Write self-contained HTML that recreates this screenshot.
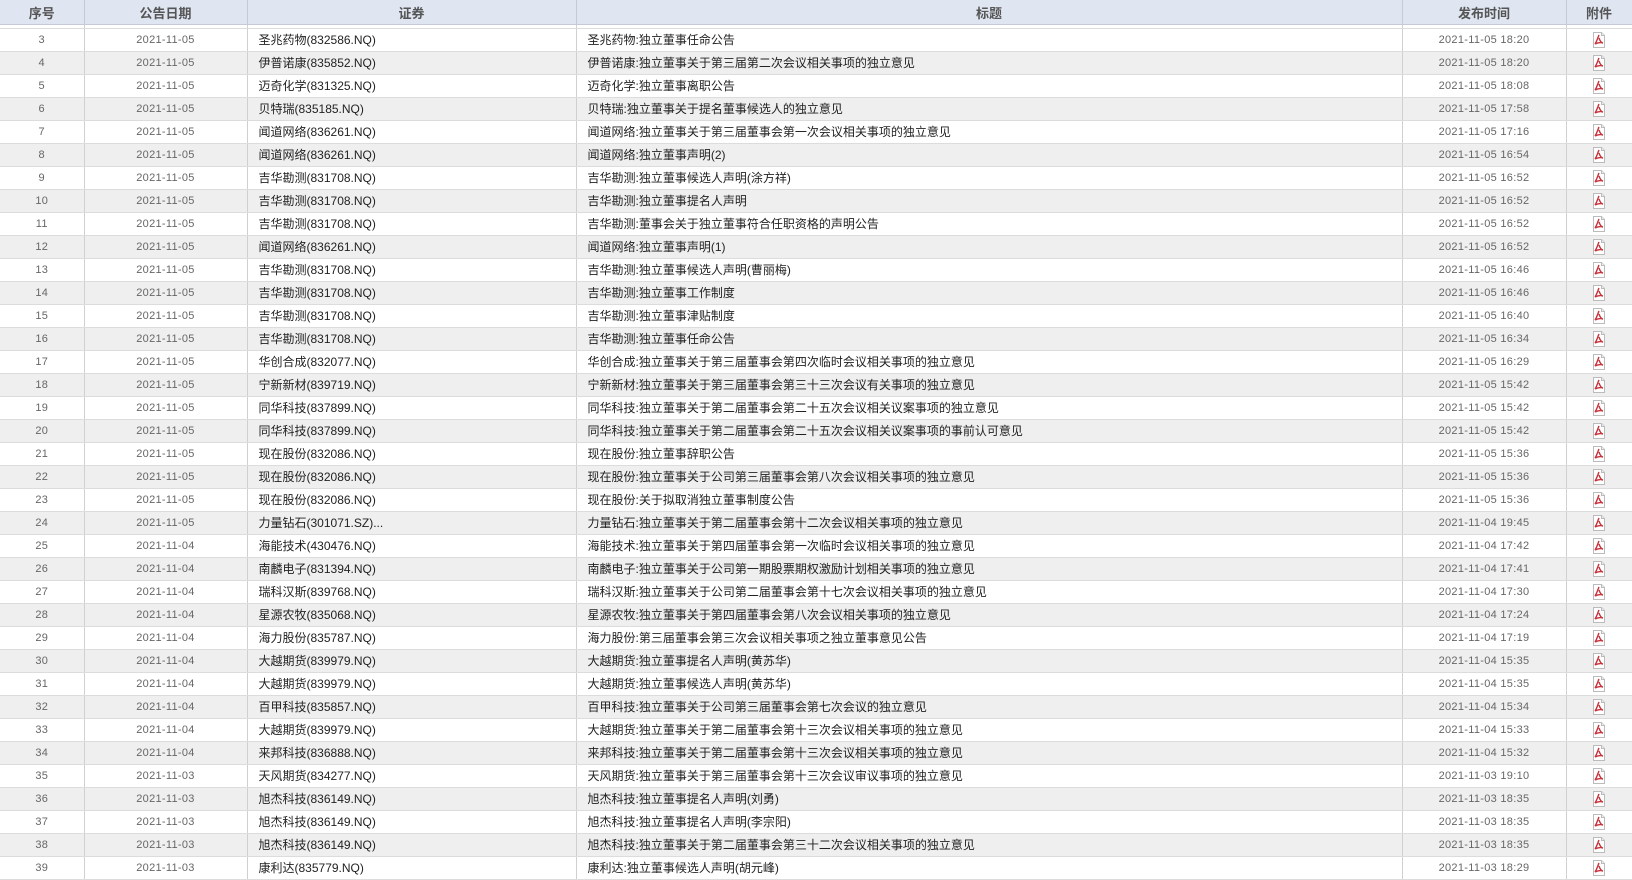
<!DOCTYPE html>
<html><head><meta charset="utf-8"><style>
body{margin:0;background:#fff;font-family:"Liberation Sans","Noto Sans CJK SC",sans-serif;font-size:12px;color:#222;overflow:hidden;width:1632px;height:868px}
table{border-collapse:collapse;table-layout:fixed;width:1632px}
th{height:24px;background:#dfe6f2;color:#555;font-weight:bold;font-size:13px;border-right:1px solid #c4cbd6;border-bottom:1px solid #c4cbd6;padding:0}
tr.gap td{height:3px;border-bottom:1px solid #ddd;padding:0;background:#fff}
td{height:22px;line-height:22px;vertical-align:middle;border-right:1px solid #d0d0d0;border-bottom:1px solid #dcdcdc;padding:0;white-space:nowrap;overflow:hidden;background:#efefef}
tr.w td{background:#fff}
td.c{text-align:center;color:#666;font-size:11px;letter-spacing:0.3px}
td.l{padding-left:11px}
td.p{text-align:center;font-size:0;line-height:0}
td.p svg{vertical-align:middle}
</style></head><body>
<svg width="0" height="0" style="position:absolute"><defs><g id="pdf"><path d="M1.5 0.5h8l3 3v12h-11z" fill="#fff" stroke="#bbb"/><path d="M9.5 0.5v3h3" fill="#eee" stroke="#bbb"/><path d="M7 3c-1 2 -2 6 -4 9M7 6c1 3 2 5 4 5M3 12c2-1 5-2 8-1" fill="none" stroke="#c8323a" stroke-width="1.4"/></g></defs></svg>
<table>
<colgroup><col style="width:84px"><col style="width:163px"><col style="width:329px"><col style="width:826px"><col style="width:164px"><col style="width:66px"></colgroup>
<thead><tr><th>序号</th><th>公告日期</th><th>证券</th><th>标题</th><th>发布时间</th><th>附件</th></tr>
<tr class="gap"><td></td><td></td><td></td><td></td><td></td><td></td></tr></thead>
<tbody>
<tr class="w"><td class="c">3</td><td class="c">2021-11-05</td><td class="l">圣兆药物(832586.NQ)</td><td class="l">圣兆药物:独立董事任命公告</td><td class="c">2021-11-05 18:20</td><td class="p"><svg width="14" height="16"><use href="#pdf"/></svg></td></tr>
<tr><td class="c">4</td><td class="c">2021-11-05</td><td class="l">伊普诺康(835852.NQ)</td><td class="l">伊普诺康:独立董事关于第三届第二次会议相关事项的独立意见</td><td class="c">2021-11-05 18:20</td><td class="p"><svg width="14" height="16"><use href="#pdf"/></svg></td></tr>
<tr class="w"><td class="c">5</td><td class="c">2021-11-05</td><td class="l">迈奇化学(831325.NQ)</td><td class="l">迈奇化学:独立董事离职公告</td><td class="c">2021-11-05 18:08</td><td class="p"><svg width="14" height="16"><use href="#pdf"/></svg></td></tr>
<tr><td class="c">6</td><td class="c">2021-11-05</td><td class="l">贝特瑞(835185.NQ)</td><td class="l">贝特瑞:独立董事关于提名董事候选人的独立意见</td><td class="c">2021-11-05 17:58</td><td class="p"><svg width="14" height="16"><use href="#pdf"/></svg></td></tr>
<tr class="w"><td class="c">7</td><td class="c">2021-11-05</td><td class="l">闻道网络(836261.NQ)</td><td class="l">闻道网络:独立董事关于第三届董事会第一次会议相关事项的独立意见</td><td class="c">2021-11-05 17:16</td><td class="p"><svg width="14" height="16"><use href="#pdf"/></svg></td></tr>
<tr><td class="c">8</td><td class="c">2021-11-05</td><td class="l">闻道网络(836261.NQ)</td><td class="l">闻道网络:独立董事声明(2)</td><td class="c">2021-11-05 16:54</td><td class="p"><svg width="14" height="16"><use href="#pdf"/></svg></td></tr>
<tr class="w"><td class="c">9</td><td class="c">2021-11-05</td><td class="l">吉华勘测(831708.NQ)</td><td class="l">吉华勘测:独立董事候选人声明(涂方祥)</td><td class="c">2021-11-05 16:52</td><td class="p"><svg width="14" height="16"><use href="#pdf"/></svg></td></tr>
<tr><td class="c">10</td><td class="c">2021-11-05</td><td class="l">吉华勘测(831708.NQ)</td><td class="l">吉华勘测:独立董事提名人声明</td><td class="c">2021-11-05 16:52</td><td class="p"><svg width="14" height="16"><use href="#pdf"/></svg></td></tr>
<tr class="w"><td class="c">11</td><td class="c">2021-11-05</td><td class="l">吉华勘测(831708.NQ)</td><td class="l">吉华勘测:董事会关于独立董事符合任职资格的声明公告</td><td class="c">2021-11-05 16:52</td><td class="p"><svg width="14" height="16"><use href="#pdf"/></svg></td></tr>
<tr><td class="c">12</td><td class="c">2021-11-05</td><td class="l">闻道网络(836261.NQ)</td><td class="l">闻道网络:独立董事声明(1)</td><td class="c">2021-11-05 16:52</td><td class="p"><svg width="14" height="16"><use href="#pdf"/></svg></td></tr>
<tr class="w"><td class="c">13</td><td class="c">2021-11-05</td><td class="l">吉华勘测(831708.NQ)</td><td class="l">吉华勘测:独立董事候选人声明(曹丽梅)</td><td class="c">2021-11-05 16:46</td><td class="p"><svg width="14" height="16"><use href="#pdf"/></svg></td></tr>
<tr><td class="c">14</td><td class="c">2021-11-05</td><td class="l">吉华勘测(831708.NQ)</td><td class="l">吉华勘测:独立董事工作制度</td><td class="c">2021-11-05 16:46</td><td class="p"><svg width="14" height="16"><use href="#pdf"/></svg></td></tr>
<tr class="w"><td class="c">15</td><td class="c">2021-11-05</td><td class="l">吉华勘测(831708.NQ)</td><td class="l">吉华勘测:独立董事津贴制度</td><td class="c">2021-11-05 16:40</td><td class="p"><svg width="14" height="16"><use href="#pdf"/></svg></td></tr>
<tr><td class="c">16</td><td class="c">2021-11-05</td><td class="l">吉华勘测(831708.NQ)</td><td class="l">吉华勘测:独立董事任命公告</td><td class="c">2021-11-05 16:34</td><td class="p"><svg width="14" height="16"><use href="#pdf"/></svg></td></tr>
<tr class="w"><td class="c">17</td><td class="c">2021-11-05</td><td class="l">华创合成(832077.NQ)</td><td class="l">华创合成:独立董事关于第三届董事会第四次临时会议相关事项的独立意见</td><td class="c">2021-11-05 16:29</td><td class="p"><svg width="14" height="16"><use href="#pdf"/></svg></td></tr>
<tr><td class="c">18</td><td class="c">2021-11-05</td><td class="l">宁新新材(839719.NQ)</td><td class="l">宁新新材:独立董事关于第三届董事会第三十三次会议有关事项的独立意见</td><td class="c">2021-11-05 15:42</td><td class="p"><svg width="14" height="16"><use href="#pdf"/></svg></td></tr>
<tr class="w"><td class="c">19</td><td class="c">2021-11-05</td><td class="l">同华科技(837899.NQ)</td><td class="l">同华科技:独立董事关于第二届董事会第二十五次会议相关议案事项的独立意见</td><td class="c">2021-11-05 15:42</td><td class="p"><svg width="14" height="16"><use href="#pdf"/></svg></td></tr>
<tr><td class="c">20</td><td class="c">2021-11-05</td><td class="l">同华科技(837899.NQ)</td><td class="l">同华科技:独立董事关于第二届董事会第二十五次会议相关议案事项的事前认可意见</td><td class="c">2021-11-05 15:42</td><td class="p"><svg width="14" height="16"><use href="#pdf"/></svg></td></tr>
<tr class="w"><td class="c">21</td><td class="c">2021-11-05</td><td class="l">现在股份(832086.NQ)</td><td class="l">现在股份:独立董事辞职公告</td><td class="c">2021-11-05 15:36</td><td class="p"><svg width="14" height="16"><use href="#pdf"/></svg></td></tr>
<tr><td class="c">22</td><td class="c">2021-11-05</td><td class="l">现在股份(832086.NQ)</td><td class="l">现在股份:独立董事关于公司第三届董事会第八次会议相关事项的独立意见</td><td class="c">2021-11-05 15:36</td><td class="p"><svg width="14" height="16"><use href="#pdf"/></svg></td></tr>
<tr class="w"><td class="c">23</td><td class="c">2021-11-05</td><td class="l">现在股份(832086.NQ)</td><td class="l">现在股份:关于拟取消独立董事制度公告</td><td class="c">2021-11-05 15:36</td><td class="p"><svg width="14" height="16"><use href="#pdf"/></svg></td></tr>
<tr><td class="c">24</td><td class="c">2021-11-05</td><td class="l">力量钻石(301071.SZ)...</td><td class="l">力量钻石:独立董事关于第二届董事会第十二次会议相关事项的独立意见</td><td class="c">2021-11-04 19:45</td><td class="p"><svg width="14" height="16"><use href="#pdf"/></svg></td></tr>
<tr class="w"><td class="c">25</td><td class="c">2021-11-04</td><td class="l">海能技术(430476.NQ)</td><td class="l">海能技术:独立董事关于第四届董事会第一次临时会议相关事项的独立意见</td><td class="c">2021-11-04 17:42</td><td class="p"><svg width="14" height="16"><use href="#pdf"/></svg></td></tr>
<tr><td class="c">26</td><td class="c">2021-11-04</td><td class="l">南麟电子(831394.NQ)</td><td class="l">南麟电子:独立董事关于公司第一期股票期权激励计划相关事项的独立意见</td><td class="c">2021-11-04 17:41</td><td class="p"><svg width="14" height="16"><use href="#pdf"/></svg></td></tr>
<tr class="w"><td class="c">27</td><td class="c">2021-11-04</td><td class="l">瑞科汉斯(839768.NQ)</td><td class="l">瑞科汉斯:独立董事关于公司第二届董事会第十七次会议相关事项的独立意见</td><td class="c">2021-11-04 17:30</td><td class="p"><svg width="14" height="16"><use href="#pdf"/></svg></td></tr>
<tr><td class="c">28</td><td class="c">2021-11-04</td><td class="l">星源农牧(835068.NQ)</td><td class="l">星源农牧:独立董事关于第四届董事会第八次会议相关事项的独立意见</td><td class="c">2021-11-04 17:24</td><td class="p"><svg width="14" height="16"><use href="#pdf"/></svg></td></tr>
<tr class="w"><td class="c">29</td><td class="c">2021-11-04</td><td class="l">海力股份(835787.NQ)</td><td class="l">海力股份:第三届董事会第三次会议相关事项之独立董事意见公告</td><td class="c">2021-11-04 17:19</td><td class="p"><svg width="14" height="16"><use href="#pdf"/></svg></td></tr>
<tr><td class="c">30</td><td class="c">2021-11-04</td><td class="l">大越期货(839979.NQ)</td><td class="l">大越期货:独立董事提名人声明(黄苏华)</td><td class="c">2021-11-04 15:35</td><td class="p"><svg width="14" height="16"><use href="#pdf"/></svg></td></tr>
<tr class="w"><td class="c">31</td><td class="c">2021-11-04</td><td class="l">大越期货(839979.NQ)</td><td class="l">大越期货:独立董事候选人声明(黄苏华)</td><td class="c">2021-11-04 15:35</td><td class="p"><svg width="14" height="16"><use href="#pdf"/></svg></td></tr>
<tr><td class="c">32</td><td class="c">2021-11-04</td><td class="l">百甲科技(835857.NQ)</td><td class="l">百甲科技:独立董事关于公司第三届董事会第七次会议的独立意见</td><td class="c">2021-11-04 15:34</td><td class="p"><svg width="14" height="16"><use href="#pdf"/></svg></td></tr>
<tr class="w"><td class="c">33</td><td class="c">2021-11-04</td><td class="l">大越期货(839979.NQ)</td><td class="l">大越期货:独立董事关于第二届董事会第十三次会议相关事项的独立意见</td><td class="c">2021-11-04 15:33</td><td class="p"><svg width="14" height="16"><use href="#pdf"/></svg></td></tr>
<tr><td class="c">34</td><td class="c">2021-11-04</td><td class="l">来邦科技(836888.NQ)</td><td class="l">来邦科技:独立董事关于第二届董事会第十三次会议相关事项的独立意见</td><td class="c">2021-11-04 15:32</td><td class="p"><svg width="14" height="16"><use href="#pdf"/></svg></td></tr>
<tr class="w"><td class="c">35</td><td class="c">2021-11-03</td><td class="l">天风期货(834277.NQ)</td><td class="l">天风期货:独立董事关于第三届董事会第十三次会议审议事项的独立意见</td><td class="c">2021-11-03 19:10</td><td class="p"><svg width="14" height="16"><use href="#pdf"/></svg></td></tr>
<tr><td class="c">36</td><td class="c">2021-11-03</td><td class="l">旭杰科技(836149.NQ)</td><td class="l">旭杰科技:独立董事提名人声明(刘勇)</td><td class="c">2021-11-03 18:35</td><td class="p"><svg width="14" height="16"><use href="#pdf"/></svg></td></tr>
<tr class="w"><td class="c">37</td><td class="c">2021-11-03</td><td class="l">旭杰科技(836149.NQ)</td><td class="l">旭杰科技:独立董事提名人声明(李宗阳)</td><td class="c">2021-11-03 18:35</td><td class="p"><svg width="14" height="16"><use href="#pdf"/></svg></td></tr>
<tr><td class="c">38</td><td class="c">2021-11-03</td><td class="l">旭杰科技(836149.NQ)</td><td class="l">旭杰科技:独立董事关于第二届董事会第三十二次会议相关事项的独立意见</td><td class="c">2021-11-03 18:35</td><td class="p"><svg width="14" height="16"><use href="#pdf"/></svg></td></tr>
<tr class="w"><td class="c">39</td><td class="c">2021-11-03</td><td class="l">康利达(835779.NQ)</td><td class="l">康利达:独立董事候选人声明(胡元峰)</td><td class="c">2021-11-03 18:29</td><td class="p"><svg width="14" height="16"><use href="#pdf"/></svg></td></tr>
</tbody></table>
</body></html>
